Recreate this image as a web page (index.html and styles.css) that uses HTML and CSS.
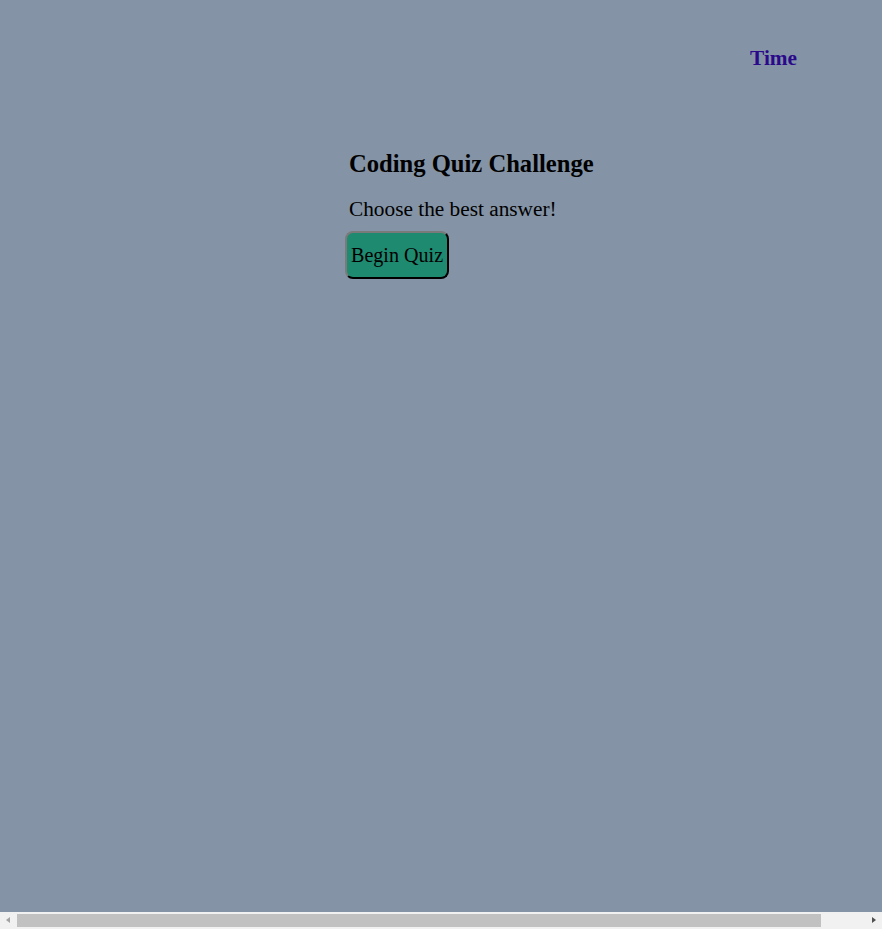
FILE: index.html
```html
<!DOCTYPE html>
<html>
<head>
<meta charset="utf-8">
<link rel="stylesheet" href="styles.css">
</head>
<body>
<div class="page">
  <header class="top">
    <span class="timer">Time</span>
  </header>
  <main class="quiz">
    <h2 class="title">Coding Quiz Challenge</h2>
    <p class="lead">Choose the best answer!</p>
    <button class="begin">Begin Quiz</button>
  </main>
</div>
<div class="hscroll" aria-hidden="true">
  <span class="arrow arrow-left"></span>
  <span class="thumb"></span>
  <span class="arrow arrow-right"></span>
</div>
</body>
</html>
```
FILE: styles.css
```css
html, body {
  margin: 0;
  padding: 0;
  background: #8494a6;
  overflow: hidden;
}
body {
  font-family: "Liberation Serif", serif;
  color: #000;
  height: 929px;
}
.top {
  display: flex;
  justify-content: flex-end;
  padding: 46px 85px 0 0;
  height: 40px;
}
.timer {
  color: #2a0a8a;
  font-weight: bold;
  font-size: 21.3px;
  line-height: 1.15;
}
.quiz {
  padding-left: 349px;
  padding-top: 64px;
}
.title {
  margin: 0;
  font-size: 24.6px;
  font-weight: bold;
  line-height: 27px;
}
.lead {
  margin: 20px 0 10px;
  font-size: 21.3px;
  line-height: 24px;
}
.begin {
  display: block;
  margin-left: -4px;
  font-family: inherit;
  font-size: 20.1px;
  line-height: 22px;
  background: #1e8a70;
  color: #000;
  border: 2px outset #666;
  border-top-color: #7a7a7a;
  border-left-color: #7a7a7a;
  border-bottom-color: #262626;
  border-right-color: #262626;
  border-radius: 8px;
  padding: 11px 4px;
}
.hscroll {
  position: fixed;
  left: 0;
  right: 0;
  bottom: 0;
  height: 17px;
  background: #f1f1f1;
  display: flex;
  align-items: center;
}
.thumb {
  position: absolute;
  left: 17px;
  width: 804px;
  top: 2px;
  height: 13px;
  background: #c1c1c1;
}
.arrow {
  position: absolute;
  top: 5px;
  width: 0;
  height: 0;
  border-top: 3.5px solid transparent;
  border-bottom: 3.5px solid transparent;
}
.arrow-left {
  left: 6px;
  border-right: 4px solid #a3a3a3;
}
.arrow-right {
  right: 6px;
  border-left: 4px solid #505050;
}
```
